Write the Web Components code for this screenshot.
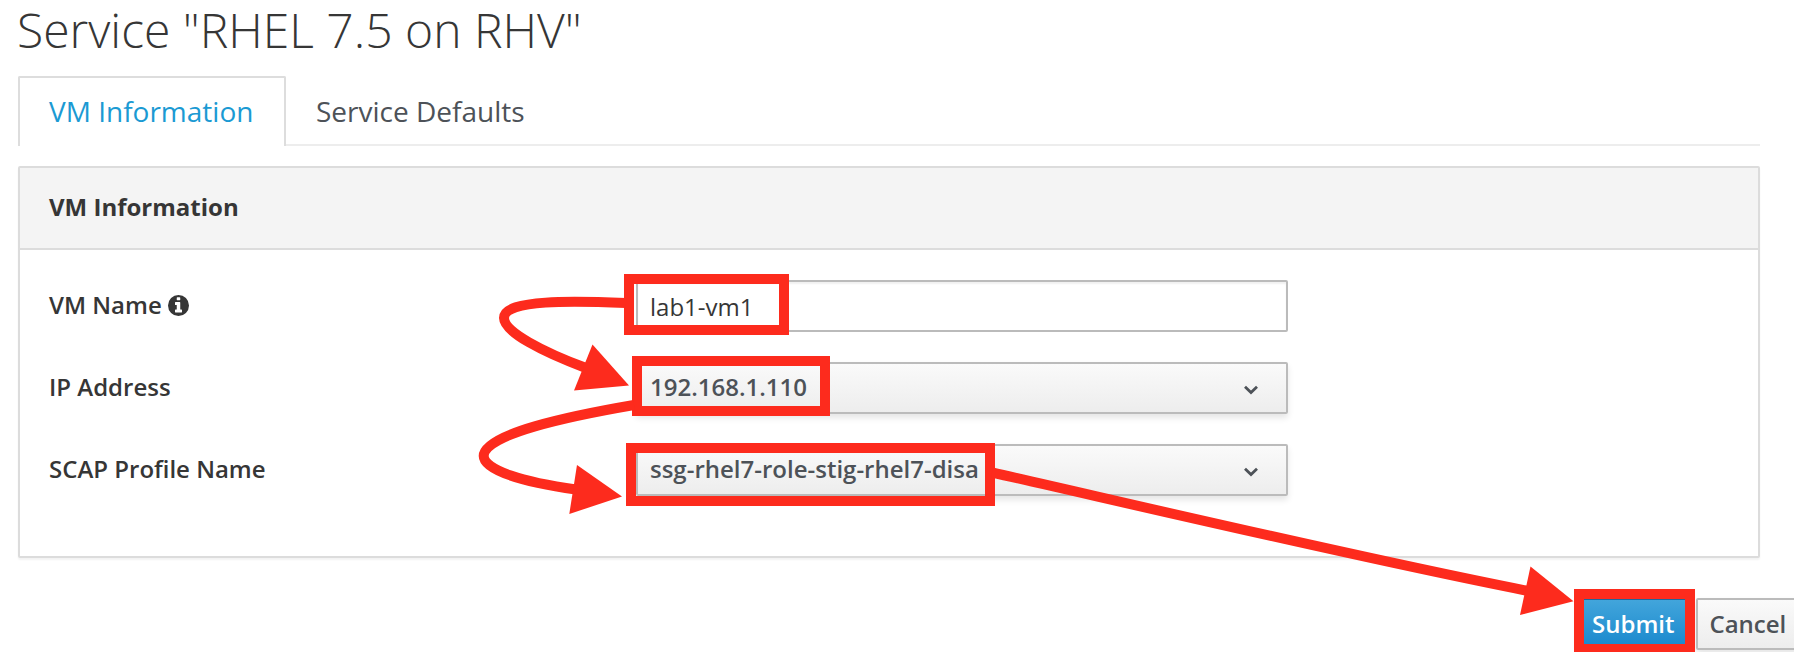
<!DOCTYPE html>
<html lang="en">
<head>
<meta charset="utf-8">
<title>Service "RHEL 7.5 on RHV"</title>
<style>
  html, body { margin: 0; height: 652px; overflow: hidden; background: #fff; }
  body { font-family: "Open Sans", "Noto Sans", sans-serif; color: #363636; }
</style>
</head>
<body>
<service-page heading='Service "RHEL 7.5 on RHV"'>
  <tab-item slot="tabs" active>VM Information</tab-item>
  <tab-item slot="tabs">Service Defaults</tab-item>
  <form-panel heading="VM Information">
    <form-row label="VM Name" info><text-field>lab1-vm1</text-field></form-row>
    <form-row label="IP Address"><select-field>192.168.1.110</select-field></form-row>
    <form-row label="SCAP Profile Name"><select-field>ssg-rhel7-role-stig-rhel7-disa</select-field></form-row>
  </form-panel>
  <action-button slot="actions" primary>Submit</action-button>
  <action-button slot="actions">Cancel</action-button>
</service-page>
<guide-marks></guide-marks>
<script>
const define = (name, render) => customElements.define(name, class extends HTMLElement {
  constructor() {
    super();
    this.attachShadow({ mode: 'open' }).innerHTML = render(this);
  }
});

define('service-page', el => `
  <style>
    :host { display: block; width: 1794px; height: 652px; }
    h1 { margin: 0; padding: 0 17px; height: 76px; font-size: 48px; font-weight: 300; line-height: 60px; white-space: nowrap; }
    nav { display: flex; margin: 0 34px 20px 18px; height: 70px; box-sizing: border-box; box-shadow: inset 0 -2px #ededed; }
    main { margin: 0 34px 0 18px; }
    footer { display: flex; gap: 8px; margin: 40px 0 0 1578px; }
  </style>
  <h1>${el.getAttribute('heading')}</h1>
  <nav><slot name="tabs"></slot></nav>
  <main><slot></slot></main>
  <footer><slot name="actions"></slot></footer>`);

define('tab-item', () => `
  <style>
    :host { display: block; box-sizing: border-box; height: 70px; padding: 14px 28px 0; border: 2px solid transparent; border-bottom: 0; font-size: 28px; line-height: 38px; color: #4d5258; white-space: nowrap; }
    :host([active]) { width: 268px; padding-left: 29px; border-color: #ddd; border-radius: 2px 2px 0 0; background: #fff; color: #1b9ad3; }
  </style>
  <slot></slot>`);

define('form-panel', el => `
  <style>
    :host { display: block; box-sizing: border-box; height: 392px; border: 2px solid #dcdcdc; border-radius: 2px; box-shadow: 0 2px 2px rgba(0,0,0,.05); background: #fff; }
    header { height: 80px; border-bottom: 2px solid #dcdcdc; background: #f4f4f4; padding-left: 29px; font-size: 24px; font-weight: 700; line-height: 78px; }
    .rows { display: grid; gap: 30px; padding: 30px 30px 0 29px; }
  </style>
  <header>${el.getAttribute('heading')}</header>
  <div class="rows"><slot></slot></div>`);

define('form-row', el => `
  <style>
    :host { display: grid; grid-template-columns: 587px 652px; height: 52px; }
    label { display: flex; align-items: center; gap: 6px; height: 48px; font-size: 24px; font-weight: 600; white-space: nowrap; }
    svg { width: 21px; height: 21px; margin-top: 2px; fill: #363636; }
  </style>
  <label>${el.getAttribute('label')}${el.hasAttribute('info') ? `
    <svg viewBox="0 0 1536 1536"><path fill-rule="evenodd" d="M768 0a768 768 0 1 1 0 1536a768 768 0 1 1 0-1536zM1024 1248V1088Q1024 1056 992 1056H896V544Q896 512 864 512H544Q512 512 512 544V704Q512 736 544 736H640V1056H544Q512 1056 512 1088V1248Q512 1280 544 1280H992Q1024 1280 1024 1248zM896 352V192Q896 160 864 160H672Q640 160 640 192V352Q640 384 672 384H864Q896 384 896 352z"/></svg>` : ''}</label>
  <slot></slot>`);

define('text-field', () => `
  <style>
    :host { display: block; box-sizing: border-box; height: 52px; border: 2px solid #bbb; border-radius: 2px; padding-left: 12px; background: #fff; box-shadow: inset 0 2px 2px rgba(0,0,0,.06); font-size: 24px; line-height: 49px; color: #363636; }
  </style>
  <slot></slot>`);

define('select-field', () => `
  <style>
    :host { display: flex; justify-content: space-between; box-sizing: border-box; height: 52px; border: 2px solid #bbb; border-radius: 2px; padding: 0 27.500px 0 12px; background: linear-gradient(#fafafa, #ededed); box-shadow: 0 4px 6px rgba(3,3,3,.1); font-size: 24px; font-weight: 600; line-height: 46px; color: #4d5258; }
    svg { width: 16px; height: 12px; margin-top: 20px; fill: none; stroke: #4d5258; stroke-width: 2.8; }
  </style>
  <span><slot></slot></span>
  <svg viewBox="0 0 16 12"><path d="M2 2.8L8 8.6L14 2.8"/></svg>`);

define('action-button', () => `
  <style>
    :host { display: block; box-sizing: border-box; height: 52px; border: 2px solid #bbb; border-radius: 2px; padding: 0 12px 0 11px; background: linear-gradient(#fafafa, #ededed); box-shadow: 0 4px 6px rgba(3,3,3,.1); font-size: 24px; font-weight: 600; line-height: 47px; color: #4d5258; white-space: nowrap; }
    :host([primary]) { padding-left: 12px; border-color: #1f669b; background: linear-gradient(#42a5db, #1988cd); color: #fff; }
  </style>
  <slot></slot>`);

define('guide-marks', () => `
  <style>
    :host { position: absolute; top: 0; left: 0; width: 1794px; height: 652px; overflow: hidden; pointer-events: none; }
    svg { display: block; }
    .line { fill: none; stroke: #fd2b1d; stroke-width: 10; }
    .head { fill: #fd2b1d; }
  </style>
  <svg width="1794" height="652">
    <g class="line">
      <rect x="629" y="279" width="155" height="51"/>
      <rect x="637" y="361" width="188" height="50"/>
      <rect x="631" y="448" width="359" height="53"/>
      <rect x="1579" y="594" width="111" height="55"/>
      <path d="M626 303C574 301 504 299 504 318C504 332 543 352 586 368"/>
      <path d="M634 405C570 416 483.700 434 483.700 456C483.700 470 523 482 576 489.500"/>
      <path d="M992 472.500C1110 499 1350 556 1528 591"/>
    </g>
    <g class="head">
      <path d="M629 385.500L592.500 344.500L574 390.500z"/>
      <path d="M622 496.500L577 465L569.300 514z"/>
      <path d="M1573.500 601.300L1530.500 566.500L1520 615z"/>
    </g>
  </svg>`);
</script>
</body>
</html>
